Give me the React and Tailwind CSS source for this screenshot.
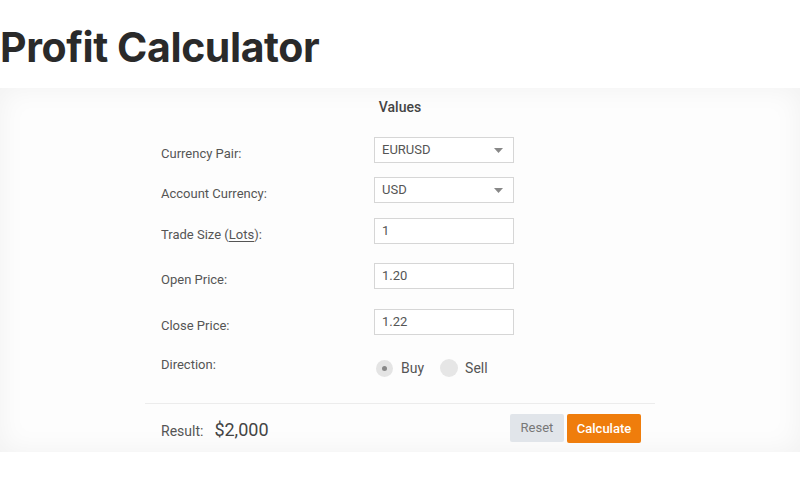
const selects = [
  { label: 'Currency Pair:', value: 'EURUSD', mt: 'mt-[20px]' },
  { label: 'Account Currency:', value: 'USD', mt: 'mt-[14px]' },
]

const inputs = [
  { label: 'Open Price:', value: '1.20', mt: 'mt-[19px]' },
  { label: 'Close Price:', value: '1.22', mt: 'mt-[20px]' },
]

function Row({ label, mt, children }) {
  return (
    <div className={`flex h-[26px] items-center ${mt}`}>
      <div className="w-[229px] pt-[7px] pl-4 text-[13px] text-[#555]">{label}</div>
      {children}
    </div>
  )
}

function Box({ children }) {
  return (
    <div className="flex h-[26px] w-[140px] items-center justify-between border border-[#d6d6d6] bg-white px-[7px] text-[13px] text-[#555]">
      {children}
    </div>
  )
}

export default function App() {
  return (
    <div className="min-h-[487px] bg-white font-['Roboto',sans-serif]">
      <h1 className="pt-[23px] pb-[16px] font-['Inter',sans-serif] text-[41px] leading-[49px] font-bold tracking-[-0.4px] text-[#2a2a2a]">
        Profit Calculator
      </h1>
      <div className="h-[364px] bg-[#fdfdfd] shadow-[inset_0_0_28px_rgba(0,0,0,0.05)]">
        <div className="mx-auto w-[510px] pt-[9px]">
          <div className="text-center text-[14px] leading-[20px] font-medium text-[#444]">Values</div>
          {selects.map((s) => (
            <Row key={s.label} label={s.label} mt={s.mt}>
              <Box>
                <span>{s.value}</span>
                <svg width="9" height="5" viewBox="0 0 9 5" className="mr-[3px]">
                  <path d="M0 0h9L4.5 5z" fill="#888" />
                </svg>
              </Box>
            </Row>
          ))}
          <Row label={<span>Trade Size (<span className="underline underline-offset-2">Lots</span>):</span>} mt="mt-[15px]">
            <Box>
              <span>1</span>
            </Box>
          </Row>
          {inputs.map((s) => (
            <Row key={s.label} label={s.label} mt={s.mt}>
              <Box>
                <span>{s.value}</span>
              </Box>
            </Row>
          ))}
          <div className="mt-[19px] flex h-[24px] items-center">
            <div className="w-[229px] pb-[2px] pl-4 text-[13px] text-[#555]">Direction:</div>
            <div className="flex items-center pt-[4px] text-[14px] text-[#555]">
              <span className="ml-[2px] flex h-[17px] w-[17px] items-center justify-center rounded-full bg-[#e4e4e4]">
                <span className="h-[5px] w-[5px] rounded-full bg-[#888]" />
              </span>
              <span className="ml-[8px]">Buy</span>
              <span className="ml-[16px] h-[18px] w-[18px] rounded-full bg-[#e6e6e6]" />
              <span className="ml-[7px]">Sell</span>
            </div>
          </div>
          <div className="mt-[25px] border-t border-[#ececec]" />
          <div className="flex items-center justify-between pt-[10px] pl-4 pr-[14px]">
            <div className="flex items-baseline pt-[2px] text-[#444]">
              <span className="text-[14px] text-[#555]">Result:</span>
              <span className="ml-[11px] text-[18px]">$2,000</span>
            </div>
            <div className="flex gap-[3px]">
              <button className="h-[28px] w-[54px] rounded-[2px] bg-[#e1e5ea] text-[13px] text-[#777]">Reset</button>
              <button className="h-[29px] w-[74px] rounded-[2px] bg-[#ef7d0c] text-[13px] font-medium text-white">Calculate</button>
            </div>
          </div>
        </div>
      </div>
    </div>
  )
}
